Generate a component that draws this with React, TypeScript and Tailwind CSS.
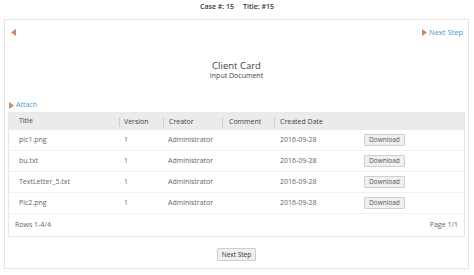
import React from "react";

const rows = [
  { title: "pic1.png" },
  { title: "bu.txt" },
  { title: "TextLetter_5.txt" },
  { title: "Pic2.png" },
];

function Tri({ dir = "right" }: { dir?: "left" | "right" }) {
  return (
    <svg width="5" height="7" viewBox="0 0 5 7" className="inline-block">
      {dir === "right" ? (
        <polygon points="0,0 5,3.5 0,7" fill="#c98a68" />
      ) : (
        <polygon points="5,0 0,3.5 5,7" fill="#c98a68" />
      )}
    </svg>
  );
}

export default function App() {
  return (
    <div
      className="w-[474px] h-[275px] bg-white text-[#666] overflow-hidden"
      style={{ fontFamily: '"Open Sans", "Liberation Sans", sans-serif' }}
    >
      <div className="h-[19px] flex items-center justify-center gap-[9px] text-[7px] font-semibold text-[#333] pb-[5px]">
        <span>Case #: 15</span>
        <span>Title: #15</span>
      </div>
      <div className="mx-[4px] w-[465px] h-[250px] border border-[#e4e4e4] flex flex-col px-[3px]">
        <div className="flex items-center justify-between h-[24px] pt-[1px] pl-[3px] pr-[2px]">
          <Tri dir="left" />
          <div className="flex items-center gap-[2px] text-[7.5px] text-[#4a9ad0]">
            <Tri />
            <span>Next Step</span>
          </div>
        </div>
        <div className="flex flex-col items-center mt-[16px]">
          <div className="text-[9.5px] leading-[11px] text-[#444]">Client Card</div>
          <div className="text-[7px] leading-[9px] text-[#444]">Input Document</div>
        </div>
        <div className="flex items-center gap-[2px] mt-[20px] h-[10px] pl-[1px] text-[7px] text-[#4a9ad0]">
          <Tri />
          <span>Attach</span>
        </div>
        <div className="mt-[2px] w-[457px] border border-[#e8e8e8] text-[7px]">
          <div className="flex items-center h-[17px] bg-[#ebebeb] text-[#444]">
            <div className="w-[110px] pl-[10px]">Title</div>
            <div className="w-[44px] pl-[4px] border-l border-[#ccc] h-[10px] leading-[10px]">Version</div>
            <div className="w-[59px] pl-[5px] border-l border-[#ccc] h-[10px] leading-[10px]">Creator</div>
            <div className="w-[52px] pl-[6px] border-l border-[#ccc] h-[10px] leading-[10px]">Comment</div>
            <div className="flex-1 pl-[5px] border-l border-[#ccc] h-[10px] leading-[10px]">Created Date</div>
          </div>
          {rows.map((r) => (
            <div key={r.title} className="flex items-center h-[21px] border-b border-[#f2f2f2]">
              <div className="w-[110px] pl-[10px]">{r.title}</div>
              <div className="w-[44px] pl-[5px]">1</div>
              <div className="w-[59px] pl-[5px]">Administrator</div>
              <div className="w-[52px]"></div>
              <div className="w-[90px] pl-[6px]">2016-09-28</div>
              <div className="h-[12px] px-[4px] flex items-center border border-[#cfcfcf] bg-[#f0f0f0] text-[6.5px] text-[#555] rounded-[1px]">
                Download
              </div>
            </div>
          ))}
          <div className="flex items-center justify-between h-[22px] px-[6px] text-[#666]">
            <span>Rows 1-4/4</span>
            <span>Page 1/1</span>
          </div>
        </div>
        <div className="flex justify-center mt-[11px]">
          <div className="h-[13px] px-[4px] flex items-center border border-[#cfcfcf] bg-[#f0f0f0] text-[6.5px] text-[#333] rounded-[1px]">
            Next Step
          </div>
        </div>
      </div>
    </div>
  );
}
